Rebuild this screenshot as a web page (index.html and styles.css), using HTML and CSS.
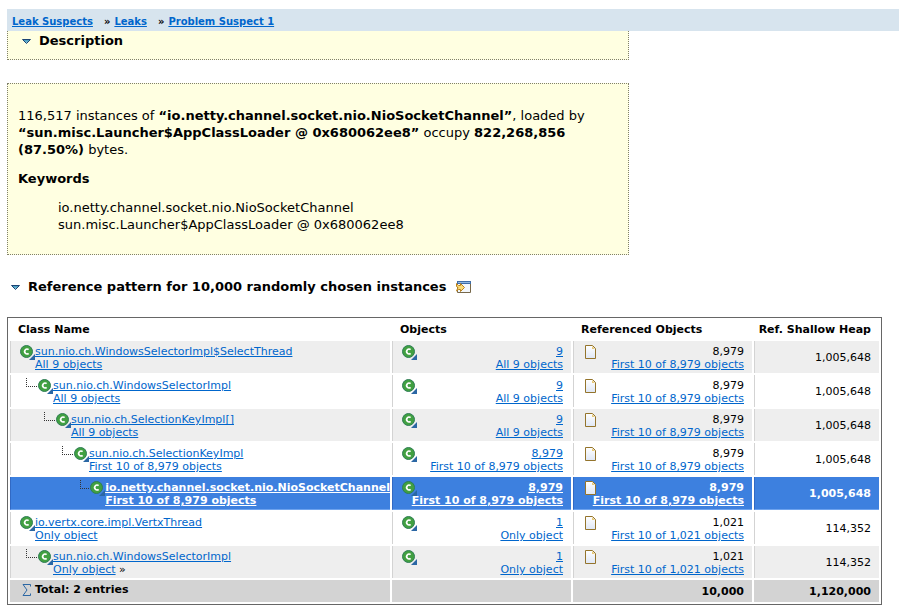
FILE: index.html
```html
<!DOCTYPE html>
<html lang="en">
<head>
<meta charset="utf-8">
<title>Problem Suspect 1</title>
<link rel="stylesheet" href="styles.css">
</head>
<body>
<svg class="defs" aria-hidden="true">
  <defs>
    <linearGradient id="arrow" x1="0" y1="0" x2="0" y2="1"><stop offset="0" stop-color="#2f8fb5"/><stop offset="1" stop-color="#9fd3e6"/></linearGradient>
    <linearGradient id="paper" x1="0" y1="0" x2="0" y2="1"><stop offset="0" stop-color="#fff"/><stop offset="1" stop-color="#dfe7f5"/></linearGradient>
    <symbol id="i-arrow" viewBox="0 0 9 5"><path d="M0.5 0.5H8.5L4.5 4.5Z" fill="url(#arrow)" stroke="#1c4474"/></symbol>
    <symbol id="i-class" viewBox="0 0 16 16"><path d="M15 9v6H9z" fill="#2b67a4"/><circle cx="6.5" cy="6.5" r="6" fill="#41a041" stroke="#2f7d56"/><path d="M8.600 4.700A2.300 2.500 0 1 0 8.600 8.300" fill="none" stroke="#fff" stroke-width="1.700"/></symbol>
    <symbol id="i-file" viewBox="0 0 12 15"><path d="M0.5 0.5H7.5L10.5 3.5V13.5H0.5Z" fill="url(#paper)" stroke="#94742c"/><path d="M7 1l3 3H7z" fill="#e8c978"/></symbol>
    <symbol id="i-open" viewBox="0 0 15 12"><path d="M1.5 1H14.5V11.5H1.5Z" fill="#f3f7fc" stroke="#77684a"/><path d="M1 0h14v3H1z" fill="#3f6da8"/><path d="M2 1h12v1H2z" fill="#8db6e2"/><path d="M0.5 2.5l2 2h2v-2l4 4-4 4v-2h-2l-2 1.500 1.500-3.500-1.500-1z" fill="#fbdc78" stroke="#b8801c"/></symbol>
    <symbol id="i-sum" viewBox="0 0 10 12"><path d="M8.500 2.500V0.500H1L5 6 1 11.500H8.500V9.500" fill="none" stroke="#2b67a4"/></symbol>
  </defs>
</svg>
<nav class="crumbs">
  <a href="#">Leak Suspects</a><span>»</span><a href="#">Leaks</a><span>»</span><a href="#">Problem Suspect 1</a>
</nav>
<main class="page">
  <section class="note note-title">
    <h2><svg class="arrow"><use href="#i-arrow"/></svg>Description</h2>
  </section>
  <section class="note note-body">
    <p>116,517 instances of <strong>“io.netty.channel.socket.nio.NioSocketChannel”</strong>, loaded by <strong>“sun.misc.Launcher$AppClassLoader @ 0x680062ee8”</strong> occupy <strong>822,268,856 (87.50%)</strong> bytes.</p>
    <p><strong>Keywords</strong></p>
    <ul><li>io.netty.channel.socket.nio.NioSocketChannel</li><li>sun.misc.Launcher$AppClassLoader @ 0x680062ee8</li></ul>
  </section>
  <h2 class="section-title"><svg class="arrow"><use href="#i-arrow"/></svg>Reference pattern for 10,000 randomly chosen instances <a href="#" aria-label="Open in editor"><svg class="open"><use href="#i-open"/></svg></a></h2>
  <div class="table-wrap">
  <table>
    <colgroup><col><col class="c-obj"><col class="c-obj"><col class="c-heap"></colgroup>
    <thead><tr><th>Class Name</th><th>Objects</th><th>Referenced Objects</th><th class="num">Ref. Shallow Heap</th></tr></thead>
    <tbody>
      <tr class="odd">
        <td><div class="node"><svg class="cls"><use href="#i-class"/></svg><div><a href="#">sun.nio.ch.WindowsSelectorImpl$SelectThread</a><br><a href="#">All 9 objects</a></div></div></td>
        <td><div class="pair"><svg class="cls"><use href="#i-class"/></svg><div><a href="#">9</a><br><a href="#">All 9 objects</a></div></div></td>
        <td><div class="pair"><svg class="file"><use href="#i-file"/></svg><div>8,979<br><a href="#">First 10 of 8,979 objects</a></div></div></td>
        <td class="num">1,005,648</td>
      </tr>
      <tr>
        <td><div class="node l1"><i class="branch"></i><svg class="cls"><use href="#i-class"/></svg><div><a href="#">sun.nio.ch.WindowsSelectorImpl</a><br><a href="#">All 9 objects</a></div></div></td>
        <td><div class="pair"><svg class="cls"><use href="#i-class"/></svg><div><a href="#">9</a><br><a href="#">All 9 objects</a></div></div></td>
        <td><div class="pair"><svg class="file"><use href="#i-file"/></svg><div>8,979<br><a href="#">First 10 of 8,979 objects</a></div></div></td>
        <td class="num">1,005,648</td>
      </tr>
      <tr class="odd">
        <td><div class="node l2"><i class="branch"></i><svg class="cls"><use href="#i-class"/></svg><div><a href="#">sun.nio.ch.SelectionKeyImpl[]</a><br><a href="#">All 9 objects</a></div></div></td>
        <td><div class="pair"><svg class="cls"><use href="#i-class"/></svg><div><a href="#">9</a><br><a href="#">All 9 objects</a></div></div></td>
        <td><div class="pair"><svg class="file"><use href="#i-file"/></svg><div>8,979<br><a href="#">First 10 of 8,979 objects</a></div></div></td>
        <td class="num">1,005,648</td>
      </tr>
      <tr>
        <td><div class="node l3"><i class="branch"></i><svg class="cls"><use href="#i-class"/></svg><div><a href="#">sun.nio.ch.SelectionKeyImpl</a><br><a href="#">First 10 of 8,979 objects</a></div></div></td>
        <td><div class="pair"><svg class="cls"><use href="#i-class"/></svg><div><a href="#">8,979</a><br><a href="#">First 10 of 8,979 objects</a></div></div></td>
        <td><div class="pair"><svg class="file"><use href="#i-file"/></svg><div>8,979<br><a href="#">First 10 of 8,979 objects</a></div></div></td>
        <td class="num">1,005,648</td>
      </tr>
      <tr class="selected">
        <td><div class="node l4"><i class="branch"></i><svg class="cls"><use href="#i-class"/></svg><div><a href="#">io.netty.channel.socket.nio.NioSocketChannel</a><br><a href="#">First 10 of 8,979 objects</a></div></div></td>
        <td><div class="pair"><svg class="cls"><use href="#i-class"/></svg><div><a href="#">8,979</a><br><a href="#">First 10 of 8,979 objects</a></div></div></td>
        <td><div class="pair"><svg class="file"><use href="#i-file"/></svg><div>8,979<br><a href="#">First 10 of 8,979 objects</a></div></div></td>
        <td class="num">1,005,648</td>
      </tr>
      <tr>
        <td><div class="node"><svg class="cls"><use href="#i-class"/></svg><div><a href="#">io.vertx.core.impl.VertxThread</a><br><a href="#">Only object</a></div></div></td>
        <td><div class="pair"><svg class="cls"><use href="#i-class"/></svg><div><a href="#">1</a><br><a href="#">Only object</a></div></div></td>
        <td><div class="pair"><svg class="file"><use href="#i-file"/></svg><div>1,021<br><a href="#">First 10 of 1,021 objects</a></div></div></td>
        <td class="num">114,352</td>
      </tr>
      <tr class="odd">
        <td><div class="node l1"><i class="branch"></i><svg class="cls"><use href="#i-class"/></svg><div><a href="#">sun.nio.ch.WindowsSelectorImpl</a><br><a href="#">Only object</a> »</div></div></td>
        <td><div class="pair"><svg class="cls"><use href="#i-class"/></svg><div><a href="#">1</a><br><a href="#">Only object</a></div></div></td>
        <td><div class="pair"><svg class="file"><use href="#i-file"/></svg><div>1,021<br><a href="#">First 10 of 1,021 objects</a></div></div></td>
        <td class="num">114,352</td>
      </tr>
    </tbody>
    <tfoot><tr><td><div class="total"><svg class="sum"><use href="#i-sum"/></svg>Total: 2 entries</div></td><td></td><td class="num">10,000</td><td class="num">1,120,000</td></tr></tfoot>
  </table>
  </div>
</main>
</body>
</html>
```
FILE: styles.css
```css
* { box-sizing: border-box; }
body { margin: 9px 0 0 7px; background: #fff; color: #000; font: 13px/17px "DejaVu Sans", Verdana, sans-serif; }
a { color: #0066cc; }
svg { display: block; flex: none; }
.defs { position: absolute; width: 0; height: 0; }
.crumbs { display: flex; align-items: center; height: 22px; padding: 2px 5px 0; background: #d7e4ee; font-size: 10px; font-weight: bold; }
.crumbs span { margin: 0 4px 0 11px; }
.page { padding-right: 3px; }
h2 { display: flex; align-items: center; margin: 0; font-size: 13px; line-height: 16px; }
.arrow { width: 9px; height: 5px; margin-right: 8px; }
.note { width: 70%; border: 1px dotted #80806a; background: #ffffe1; }
.note-title { height: 29px; padding: 2px 14px 0; border-top: 0; }
.note-body { margin-top: 23px; padding: 23px 10px 21px; }
.note-body p { margin: 0 0 12px; }
.note-body ul { margin: 0; padding: 0 0 0 40px; list-style: none; }
.section-title { margin: 24px 0 22px; padding-left: 4px; }
.open { width: 15px; height: 12px; margin-left: 10px; }
.table-wrap { margin-right: 14px; }
table { width: 100%; table-layout: fixed; border: 1px solid #666; border-collapse: separate; border-spacing: 2px; font-size: 11px; line-height: 13px; }
.c-obj { width: 179px; }
.c-heap { width: 125px; }
th { padding: 3px 8px; text-align: left; white-space: nowrap; }
td { padding: 4px 8px 2px 7px; border-left: 1px solid #d3d3d3; white-space: nowrap; }
th.num, td.num { padding: 3px 8px 3px 4px; text-align: right; }
.odd td { background: #eee; }
.selected td { background: #3d80df; border-left-color: #3169c4; border-bottom: 1px solid #6ea3ee; color: #fff; font-weight: bold; }
.selected a { color: #fff; }
.node, .pair { display: flex; align-items: flex-start; }
.node { margin-right: -8px; padding-left: 2px; }
.l1 { padding-left: 8px; }
.l2 { padding-left: 26px; }
.l3 { padding-left: 44px; }
.l4 { padding-left: 62px; }
.branch { width: 11px; height: 9px; margin: -1px 1px 0 0; border: dotted #333; border-width: 0 0 1px 1px; }
.cls { width: 16px; height: 16px; margin-right: -1px; }
.pair { justify-content: space-between; padding-left: 2px; text-align: right; }
.pair .cls, .pair .file { margin-right: -16px; }
.file { width: 12px; height: 15px; margin-left: 2px; }
tfoot td { height: 22px; background: #d3d3d3; font-weight: bold; }
.total { display: flex; }
.sum { width: 10px; height: 12px; margin: 1px 3px 0 4px; }
tfoot td:first-child { vertical-align: top; padding-top: 3px; }
```
